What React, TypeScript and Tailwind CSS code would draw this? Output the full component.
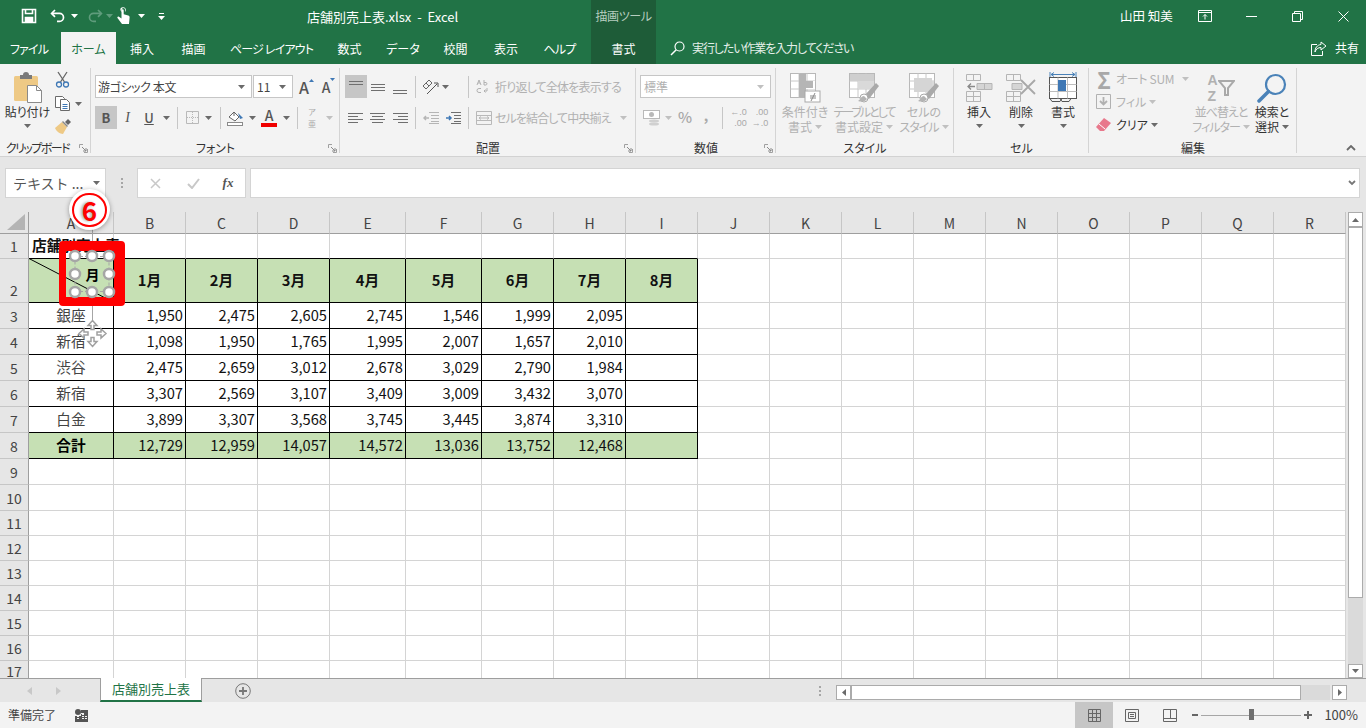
import type { ReactNode } from 'react';

function Caret({ dim = false, white = false }: { dim?: boolean; white?: boolean }) {
  return (
    <svg width="7" height="4" viewBox="0 0 7 4" className="shrink-0">
      <path d="M0 0h7L3.500 4z" fill={white ? '#fff' : dim ? '#c0c0c0' : '#6a6a6a'} />
    </svg>
  );
}

function Slot({ className, children }: { className: string; children?: ReactNode }) {
  return <div className={`flex h-full shrink-0 items-center justify-center ${className}`}>{children}</div>;
}

function Sep({ className }: { className: string }) {
  return (
    <div className={`flex h-full shrink-0 items-center justify-center ${className}`}>
      <div className="h-[22px] w-px bg-[#c6c6c6]" />
    </div>
  );
}

function Launcher() {
  return (
    <svg width="9" height="9" viewBox="0 0 9 9">
      <path d="M.5 4V.5H4M8.500 5v3.500H5" fill="none" stroke="#a0a0a0" />
      <path d="M3 3l4 4M4 7h3V4" fill="none" stroke="#8a8a8a" />
    </svg>
  );
}

function Group({ className, label, launcher, children }: { className: string; label: ReactNode; launcher?: boolean; children: ReactNode }) {
  return (
    <div className={`relative flex h-full shrink-0 flex-col ${className}`}>
      <div className="absolute right-0 top-[4px] h-[85px] w-px bg-[#d4d4d4]" />
      <div className="h-[76px]">{children}</div>
      <div className="whitespace-nowrap text-center text-[12px] leading-[16px] text-[#333]">{label}</div>
      {launcher && <div className="absolute bottom-[3px] right-[3px] flex"><Launcher /></div>}
    </div>
  );
}

function BigBtn({ className, icon, lines, dim }: { className: string; icon: ReactNode; lines: ReactNode[]; dim?: boolean }) {
  return (
    <div className={`flex shrink-0 flex-col items-center pt-[7px] text-[12px] leading-[15px] ${dim ? 'text-[#b1b1b1]' : 'text-[#333]'} ${className}`}>
      <div className="flex h-[33px] items-center justify-center">{icon}</div>
      {lines.map((l, i) => (
        <div key={i} className="flex items-center gap-[3px] whitespace-nowrap">
          {l}
          {i === lines.length - 1 && lines.length > 1 && <Caret dim={dim} />}
        </div>
      ))}
      {lines.length === 1 && <div className="mt-[5px] flex"><Caret dim={dim} /></div>}
    </div>
  );
}

function Lines({ rows, w = 20 }: { rows: [number, number, number][]; w?: number }) {
  return (
    <svg width={w} height="16" viewBox={`0 0 ${w} 16`}>
      {rows.map(([x, y, l], i) => (
        <rect key={i} x={x} y={y} width={l} height="1" fill="#6f6f6f" />
      ))}
    </svg>
  );
}

function Sheetlet({ fill = '#d9d9d9' }: { fill?: string }) {
  return (
    <>
      <rect x=".5" y=".5" width="25" height="24" fill="#fff" stroke="#b8b8b8" />
      <path d="M9 .5v24M17 .5v24M.5 8h25M.5 16h25" stroke="#c8c8c8" />
      <rect x="9" y="8" width="16" height="8" fill={fill} />
    </>
  );
}

function StyleBrush() {
  return (
    <g>
      <path d="M15 23l12-13 3 3-10 13z" fill="#a9a9a9" />
      <circle cx="15" cy="25" r="4" fill="#fff" stroke="#a9a9a9" />
      <path d="M9 28c3 1 7 1 9-2l-3-3c-3 0-3 3-6 5z" fill="#b4b4b4" />
    </g>
  );
}

const cols = ['A', 'B', 'C', 'D', 'E', 'F', 'G', 'H', 'I', 'J', 'K', 'L', 'M', 'N', 'O', 'P', 'Q', 'R'];

const shops: [string, string[]][] = [
  ['銀座', ['1,950', '2,475', '2,605', '2,745', '1,546', '1,999', '2,095']],
  ['新宿', ['1,098', '1,950', '1,765', '1,995', '2,007', '1,657', '2,010']],
  ['渋谷', ['2,475', '2,659', '3,012', '2,678', '3,029', '2,790', '1,984']],
  ['新宿', ['3,307', '2,569', '3,107', '3,409', '3,009', '3,432', '3,070']],
  ['白金', ['3,899', '3,307', '3,568', '3,745', '3,445', '3,874', '3,310']],
  ['合計', ['12,729', '12,959', '14,057', '14,572', '13,036', '13,752', '12,468']],
];

function Cell({ row, col }: { row: number; col: number }) {
  const inTable = col < 9 && row >= 2 && row <= 8;
  const aboveTable = col < 9 && row === 1;
  const green = inTable && (row === 2 || row === 8);
  const last = col === 17;
  const cls = [
    'flex items-center border-b border-r pb-px text-[14.67px] leading-none text-[#111] min-w-0',
    inTable ? 'border-r-black border-b-black' : 'border-r-[#d4d4d4]',
    aboveTable ? 'border-b-black' : inTable ? '' : 'border-b-[#d4d4d4]',
    green ? 'bg-[#c6e0b4]' : '',
    last ? 'border-r-[#9e9e9e]' : '',
  ].join(' ');
  let body: ReactNode = null;
  if (row === 1 && col === 0) body = <span className="ml-[3px] whitespace-nowrap text-[14.67px] font-bold">店舗別売上表</span>;
  if (row === 2 && col > 0 && col < 9) body = <span className="w-full text-center font-bold">{col}月</span>;
  if (row >= 3 && row <= 8 && col === 0) body = <span className={`w-full text-center ${row === 8 ? 'font-bold text-black' : 'text-[#444]'}`}>{shops[row - 3][0]}</span>;
  if (row >= 3 && row <= 8 && col > 0 && col < 8) body = <span className="w-full pr-[2px] text-right">{shops[row - 3][1][col - 1]}</span>;
  return <div className={cls}>{body}</div>;
}

const tabs = [
  ['ファイル', 'w-[61px] pr-[3px] tracking-[-0.8px] text-white'],
  ['ホーム', 'w-[55px] bg-[#f3f3f3] text-[#217346]'],
  ['挿入', 'w-[52px] text-white'],
  ['描画', 'w-[51px] text-white'],
  ['ページ レイアウト', 'w-[105px] tracking-[-0.8px] text-white'],
  ['数式', 'w-[51px] text-white'],
  ['データ', 'w-[56px] text-white'],
  ['校閲', 'w-[49px] text-white'],
  ['表示', 'w-[52px] text-white'],
  ['ヘルプ', 'w-[59px] pr-1 tracking-[-0.8px] text-white'],
  ['書式', 'w-[65px] bg-[#1e5c38] text-white'],
];

const rows = Array.from({ length: 17 }, (_, i) => i + 1);

export default function App() {
  return (
    <div className="relative h-[728px] w-[1366px] overflow-hidden bg-[#e6e6e6] font-['Noto_Sans_CJK_JP','Liberation_Sans',sans-serif] [font-feature-settings:'palt']">
      {/* title bar */}
      <div className="flex h-[32px] items-center bg-[#217346] text-[12px] text-white">
        <div className="flex h-full w-[307px] shrink-0 items-center">
          <Slot className="ml-[20px] w-[18px]">
            <svg width="16" height="16" viewBox="0 0 16 16" fill="none" stroke="#fff" strokeWidth="1.600">
              <path d="M1.500 1.500h13v13h-13z" />
              <path d="M4.500 1.500v4h7v-4" />
              <path d="M4.500 14.500v-5h7v5" fill="#fff" />
            </svg>
          </Slot>
          <Slot className="ml-[11px] w-[18px]">
            <svg width="16" height="14" viewBox="0 0 16 14" fill="none" stroke="#fff" strokeWidth="1.700">
              <path d="M5 1L1.600 4.400 5 7.800" />
              <path d="M2 4.400h7.500a4 4 0 0 1 0 8H7" />
            </svg>
          </Slot>
          <Slot className="w-[14px]"><Caret white /></Slot>
          <Slot className="ml-[5px] w-[18px]">
            <svg width="16" height="14" viewBox="0 0 16 14" fill="none" stroke="#5f9c7c" strokeWidth="1.700">
              <path d="M11 1l3.400 3.400L11 7.800" />
              <path d="M14 4.400H6.500a4 4 0 0 0 0 8H9" />
            </svg>
          </Slot>
          <Slot className="w-[10px]">
            <svg width="7" height="4" viewBox="0 0 7 4"><path d="M0 0h7L3.500 4z" fill="#5f9c7c" /></svg>
          </Slot>
          <Slot className="w-[18px]">
            <svg width="14" height="18" viewBox="0 0 14 18" fill="#fff">
              <path d="M4.500 1.500a3 3 0 0 1 5 0c.6 1.200.4 2.600-.4 3.500V2.800a1.700 1.700 0 0 0-3.400 0V5c-.9-.8-1.600-2.200-1.200-3.500z" />
              <path d="M5.500 3.300a1 1 0 0 1 2.200 0v4l4.500 1.200c1 .3 1.500 1 1.400 2l-.6 6.500H6L1.500 11c-.6-.8.500-1.900 1.400-1.300l2.600 1.800z" />
            </svg>
          </Slot>
          <Slot className="ml-[1px] w-[16px]"><Caret white /></Slot>
          <Slot className="ml-[3px] w-[18px]">
            <svg width="7" height="7" viewBox="0 0 7 7" fill="#fff"><rect x="1" width="5" height="1" /><path d="M0 3h7L3.500 7z" /></svg>
          </Slot>
        </div>
        <div className="w-[284px] shrink-0 whitespace-nowrap text-[13px] leading-none [font-feature-settings:normal]">店舗別売上表.xlsx &nbsp;-&nbsp; Excel</div>
        <div className="flex h-full w-[65px] shrink-0 items-center justify-center bg-[#1e5c38] text-[12px] tracking-[-0.4px] text-[#b5cdbf]">描画ツール</div>
        <div className="flex-1" />
        <div className="w-[77px] shrink-0 whitespace-nowrap text-[12.500px]">山田 知美</div>
        <Slot className="w-[15px]">
          <svg width="14" height="12" viewBox="0 0 14 12" fill="none" stroke="#fff">
            <path d="M.5 .5h13v11H.5zM.5 2.500h13" />
            <path d="M7 9.500V4.500M5 6.500l2-2 2 2" />
          </svg>
        </Slot>
        <Slot className="ml-[32px] w-[15px]"><div className="h-px w-[11px] bg-white" /></Slot>
        <Slot className="ml-[31px] w-[15px]">
          <svg width="11" height="11" viewBox="0 0 11 11" fill="none" stroke="#fff">
            <path d="M.5 2.500h8v8h-8z" />
            <path d="M2.500 2.500v-2h8v8h-2" />
          </svg>
        </Slot>
        <Slot className="ml-[31px] mr-[15px] w-[15px]">
          <svg width="11" height="11" viewBox="0 0 11 11" stroke="#fff"><path d="M.5 .5l10 10M10.500 .5l-10 10" /></svg>
        </Slot>
      </div>

      {/* tabs */}
      <div className="flex h-[32px] items-stretch bg-[#217346] text-[12px]">
        {tabs.map(([t, c]) => (
          <div key={t} className={`flex shrink-0 items-center justify-center whitespace-nowrap pt-[2px] ${c}`}>{t}</div>
        ))}
        <div className="ml-[14px] flex items-center gap-[7px] text-[#e4efe9]">
          <svg width="15" height="15" viewBox="0 0 15 15" fill="none" stroke="#fff" strokeWidth="1.200">
            <circle cx="9.500" cy="5.500" r="4.500" />
            <path d="M6.200 8.800L1 14" strokeWidth="1.500" />
          </svg>
          <span className="whitespace-nowrap tracking-[-1.1px]">実行したい作業を入力してください</span>
        </div>
        <div className="flex-1" />
        <div className="mr-[7px] flex items-center gap-[8px] text-white">
          <svg width="16" height="15" viewBox="0 0 16 15" fill="none" stroke="#fff">
            <path d="M6 3.500H.5v11h11V10" />
            <path d="M10 1l5 4-5 4V6.500C7 6.500 5 8 4 11c0-4 2-7 6-7.500z" />
          </svg>
          <span>共有</span>
        </div>
      </div>

      {/* ribbon */}
      <div className="flex h-[93px] border-b border-[#d2d2d2] bg-[#f3f3f3]">
        <Group className="w-[91px]" label={<span className="-ml-[16px] inline-block tracking-[-1.500px]">クリップボード</span>} launcher>
          <div className="flex">
            <BigBtn
              className="w-[55px]"
              lines={['貼り付け']}
              icon={
                <svg width="30" height="31" viewBox="0 0 30 31">
                  <rect x="1" y="4" width="24" height="25" rx="1.500" fill="#eec985" />
                  <path d="M7 3h3a3 3 0 0 1 6 0h3v4H7z" fill="#7a7a7a" />
                  <path d="M14.500 13.500h9l5 5v12h-14z" fill="#fff" stroke="#8a8a8a" />
                  <path d="M23.500 13.500v5h5" fill="none" stroke="#8a8a8a" />
                </svg>
              }
            />
            <div className="flex flex-col">
              <div className="flex h-[23px] items-center pt-[7px]">
                <svg width="15" height="17" viewBox="0 0 15 17" fill="none">
                  <path d="M3 1l6.500 10M12 1L5.500 11" stroke="#666" strokeWidth="1.300" />
                  <circle cx="4" cy="13.500" r="2.500" stroke="#3f78b5" strokeWidth="1.300" />
                  <circle cx="11" cy="13.500" r="2.500" stroke="#3f78b5" strokeWidth="1.300" />
                </svg>
              </div>
              <div className="mt-[5px] flex h-[23px] items-center gap-[5px]">
                <svg width="15" height="15" viewBox="0 0 15 15" fill="#fff" stroke="#6a6a6a">
                  <path d="M.5 .5h7l2 2v9h-9z" />
                  <path d="M5.500 3.500h6l3 3v8h-9z" />
                  <path d="M7.500 8.500h5M7.500 10.500h5M7.500 12.500h5" stroke="#3f78b5" />
                </svg>
                <Caret />
              </div>
              <div className="flex h-[23px] items-center">
                <svg width="16" height="15" viewBox="0 0 16 15">
                  <path d="M0 9l7-6 5 5-4 7c-3 0-7-3-8-6z" fill="#eec985" />
                  <path d="M7 3l5 5 1-1-5-5z" fill="#888" />
                  <path d="M10 3l3-3 3 3-3 3z" fill="#666" />
                </svg>
              </div>
            </div>
          </div>
        </Group>

        <Group className="w-[249px]" label="フォント" launcher>
          <div className="mt-[11px] flex h-[23px] pl-[4px]">
            <div className="flex h-full w-[157px] shrink-0 items-center justify-between border border-[#c6c6c6] bg-white pl-[2px] pr-[6px] text-[12px] tracking-[-0.4px] text-[#444]">
              <span>游ゴシック 本文</span>
              <Caret />
            </div>
            <div className="ml-px flex h-full w-[40px] shrink-0 items-center justify-between border border-[#c6c6c6] bg-white pl-[3px] pr-[6px] text-[12px] text-[#444]">
              <span>11</span>
              <Caret />
            </div>
            <Slot className="w-[22px]">
              <span className="relative text-[16px] font-medium leading-none text-[#555]">A<svg width="5" height="3" viewBox="0 0 5 3" className="absolute -right-[5px] top-0"><path d="M0 3h5L2.500 0z" fill="#3f78b5" /></svg></span>
            </Slot>
            <Slot className="w-[22px]">
              <span className="relative text-[14px] font-medium leading-none text-[#555]">A<svg width="5" height="3" viewBox="0 0 5 3" className="absolute -right-[5px] -top-[2px]"><path d="M0 0h5L2.500 3z" fill="#3f78b5" /></svg></span>
            </Slot>
          </div>
          <div className="mt-[8px] flex h-[23px] pl-[4px] text-[#555]">
            <Slot className="w-[22px] bg-[#c6c6c6] text-[13px] font-bold">B</Slot>
            <Slot className="w-[21px] font-['Liberation_Serif',serif] text-[14px] italic">I</Slot>
            <Slot className="w-[22px] text-[13px] font-medium underline">U</Slot>
            <Slot className="w-[12px]"><Caret /></Slot>
            <Sep className="w-[10px]" />
            <Slot className="w-[20px]">
              <svg width="13" height="13" viewBox="0 0 13 13" fill="none" stroke="#b9b9b9">
                <path d="M.5 .5h12v12H.5z" />
                <path d="M6.500 1v11M1 6.500h11" strokeDasharray="1 1" />
              </svg>
            </Slot>
            <Slot className="w-[13px]"><Caret /></Slot>
            <Sep className="w-[10px]" />
            <Slot className="w-[21px]">
              <svg width="17" height="16" viewBox="0 0 17 16">
                <path d="M2 7l5-5 5 5-4 4z" fill="#fff" stroke="#666" />
                <path d="M7 2v4" stroke="#666" />
                <path d="M11 3l3 3 2 2-3 1z" fill="#3f78b5" />
                <rect x=".5" y="12.500" width="15" height="3" fill="#fff" stroke="#8a8a8a" />
              </svg>
            </Slot>
            <Slot className="w-[12px]"><Caret /></Slot>
            <Slot className="w-[22px]">
              <div className="flex flex-col items-center">
                <span className="text-[14px] font-medium leading-[13px]">A</span>
                <div className="mt-[1px] h-[4px] w-[16px] bg-[#f00000]" />
              </div>
            </Slot>
            <Slot className="w-[12px]"><Caret /></Slot>
            <Sep className="w-[10px]" />
            <Slot className="w-[20px] text-[8px] leading-[12px] text-[#aaa]">
              <div className="text-center">ア<br />亜</div>
            </Slot>
            <Slot className="w-[14px]"><Caret dim /></Slot>
          </div>
        </Group>

        <Group className="w-[296px]" label="配置" launcher>
          <div className="mt-[11px] flex h-[23px] pl-[5px] text-[12px] text-[#b1b1b1]">
            <Slot className="w-[22px] bg-[#c6c6c6]"><Lines w={14} rows={[[0, 2, 14], [0, 5, 14]]} /></Slot>
            <Slot className="w-[22px]"><Lines w={14} rows={[[0, 5, 14], [0, 8, 14], [0, 11, 14]]} /></Slot>
            <Slot className="w-[22px]"><Lines w={14} rows={[[0, 11, 14], [0, 14, 14]]} /></Slot>
            <Sep className="w-[8px]" />
            <Slot className="w-[22px]">
              <svg width="17" height="16" viewBox="0 0 17 16" fill="none" stroke="#666">
                <path d="M1 7l6-6 3 3-6 6zM4 4l3 3" />
                <path d="M5 15l10-10M12 4h4v4" stroke="#555" />
              </svg>
            </Slot>
            <Slot className="w-[8px]"><Caret /></Slot>
            <Slot className="w-[14px]" />
            <Sep className="w-[10px]" />
            <Slot className="w-[19px] pl-[1px]">
              <svg width="14" height="16" viewBox="0 0 14 16" fill="none" stroke="#b1b1b1">
                <path d="M1 6l2-5 2 5M2 4h2M8 1v5M8 3.500h2a1.300 1.300 0 0 1 0 2.500H8M5 9.500H3a2 2 0 0 0 0 4h2M11 9v3H8M9.500 10.500L8 12l1.500 1.500" />
              </svg>
            </Slot>
            <Slot className="ml-[3px] w-auto whitespace-nowrap tracking-[-0.8px]">折り返して全体を表示する</Slot>
          </div>
          <div className="mt-[8px] flex h-[23px] pl-[4px] text-[12px] text-[#b1b1b1]">
            <Slot className="w-[22px]"><Lines w={15} rows={[[0, 3, 15], [0, 6, 10], [0, 9, 15], [0, 12, 10]]} /></Slot>
            <Slot className="w-[23px]"><Lines w={15} rows={[[0, 3, 15], [2, 6, 11], [0, 9, 15], [2, 12, 11]]} /></Slot>
            <Slot className="w-[22px]"><Lines w={15} rows={[[0, 3, 15], [5, 6, 10], [0, 9, 15], [5, 12, 10]]} /></Slot>
            <Sep className="w-[8px]" />
            <Slot className="w-[23px]">
              <svg width="16" height="12" viewBox="0 0 16 12" fill="none" stroke="#b5b5b5">
                <path d="M6 .5h10M8 3.500h8M8 6.500h8M8 9.500h8M6 11.500h10" />
                <path d="M6 6H1M3 4L1 6l2 2" strokeWidth="1.500" />
              </svg>
            </Slot>
            <Slot className="w-[21px]">
              <svg width="16" height="12" viewBox="0 0 16 12" fill="none" stroke="#6f6f6f">
                <path d="M6 .5h10M9 3.500h7M9 6.500h7M9 9.500h7M6 11.500h10" />
                <path d="M1 6h5M4 4l2 2-2 2" stroke="#3f78b5" strokeWidth="1.500" />
              </svg>
            </Slot>
            <Sep className="w-[10px]" />
            <Slot className="ml-[3px] w-[16px]">
              <svg width="16" height="14" viewBox="0 0 16 14" fill="none" stroke="#b9b9b9">
                <path d="M.5 .5h15v13H.5zM.5 4.500h15M.5 9.500h15M3 7h10M3 7l2-1.500M3 7l2 1.500M13 7l-2-1.500M13 7l-2 1.500" />
              </svg>
            </Slot>
            <Slot className="ml-[3px] w-[116px] justify-start whitespace-nowrap tracking-[-0.9px]">セルを結合して中央揃え</Slot>
            <Slot className="ml-[8px] w-[8px]"><Caret dim /></Slot>
          </div>
        </Group>

        <Group className="w-[140px]" label="数値" launcher>
          <div className="ml-[4px] mt-[11px] flex h-[23px] w-[131px] items-center justify-between border border-[#c6c6c6] bg-white pl-[3px] pr-[6px] text-[12px] text-[#b1b1b1]">
            <span>標準</span>
            <Caret dim />
          </div>
          <div className="mt-[8px] flex h-[23px] pl-[4px] text-[#a8a8a8]">
            <Slot className="w-[22px]">
              <svg width="17" height="16" viewBox="0 0 17 16">
                <rect x=".5" y=".5" width="16" height="8" fill="#fff" stroke="#b9b9b9" />
                <circle cx="8.500" cy="4.500" r="2.500" fill="#b9b9b9" />
                <ellipse cx="11" cy="11" rx="5" ry="1.500" fill="#d0d0d0" />
                <ellipse cx="11" cy="14" rx="5" ry="1.500" fill="#d0d0d0" />
              </svg>
            </Slot>
            <Slot className="w-[12px]"><Caret dim /></Slot>
            <Slot className="w-[22px] text-[15px] font-medium">%</Slot>
            <Slot className="w-[20px] pb-[5px] text-[14px] font-bold">,</Slot>
            <Sep className="w-[12px]" />
            <Slot className="w-[21px] font-['Liberation_Sans',sans-serif] text-[9px] leading-[11px]"><div className="whitespace-nowrap text-right">←.0<br />.00</div></Slot>
            <Slot className="w-[22px] font-['Liberation_Sans',sans-serif] text-[9px] leading-[11px]"><div className="whitespace-nowrap text-right">.00<br />→.0</div></Slot>
          </div>
        </Group>

        <Group className="w-[178px]" label="スタイル">
          <div className="flex">
            <BigBtn
              className="w-[58px]"
              dim
              lines={['条件付き', '書式']}
              icon={
                <svg width="31" height="30" viewBox="0 0 31 30">
                  <Sheetlet fill="#fff" />
                  <rect x="9" y="1" width="7" height="23" fill="#b5b5b5" />
                  <rect x="9" y="8" width="14" height="7" fill="#b5b5b5" />
                  <rect x="15" y="18" width="15" height="11" fill="#fff" stroke="#a9a9a9" />
                  <path d="M20 23h6M20 25h6M25 20l-4 8" stroke="#8a8a8a" fill="none" />
                </svg>
              }
            />
            <BigBtn
              className="w-[60px]"
              dim
              lines={[<span className="tracking-[-2px]">テーブルとして</span>, '書式設定']}
              icon={
                <svg width="31" height="30" viewBox="0 0 31 30">
                  <Sheetlet />
                  <rect x="1" y="1" width="24" height="7" fill="#cfcfcf" />
                  <StyleBrush />
                </svg>
              }
            />
            <BigBtn
              className="w-[60px]"
              dim
              lines={['セルの', <span className="tracking-[-1px]">スタイル</span>]}
              icon={
                <svg width="31" height="30" viewBox="0 0 31 30">
                  <Sheetlet />
                  <rect x="5" y="5" width="18" height="14" fill="#d5d5d5" />
                  <StyleBrush />
                </svg>
              }
            />
          </div>
        </Group>

        <Group className="w-[135px]" label="セル">
          <div className="flex pl-[4px]">
            <BigBtn
              className="w-[42px]"
              lines={['挿入']}
              icon={
                <svg width="27" height="30" viewBox="0 0 27 30" fill="none" stroke="#b5b5b5">
                  <path d="M.5 1.500h14v6H.5zM7.500 1.500v6M.5 18.500h14v10H.5zM.5 23.500h14M7.500 18.500v10" />
                  <path d="M11 10.500h15v6H11zM18.500 10.500v6" fill="#d5d5d5" />
                  <path d="M9 13.500H2M5 10.500l-3 3 3 3" stroke="#8a8a8a" strokeWidth="1.300" />
                </svg>
              }
            />
            <BigBtn
              className="w-[42px]"
              lines={['削除']}
              icon={
                <svg width="30" height="30" viewBox="0 0 30 30" fill="none" stroke="#b5b5b5">
                  <path d="M.5 1.500h14v6H.5zM7.500 1.500v6M.5 18.500h14v10H.5zM.5 23.500h14M7.500 18.500v10" />
                  <path d="M6 10.500h10v6H6z" fill="#d5d5d5" />
                  <path d="M15 7l14 14M29 7L15 21" stroke="#a8a8a8" strokeWidth="1.800" />
                </svg>
              }
            />
            <BigBtn
              className="w-[42px]"
              lines={['書式']}
              icon={
                <svg width="28" height="31" viewBox="0 0 28 31" fill="none">
                  <path d="M1 0v5M27 0v5M2 2.500h24M5 .5l-3 2 3 2M23 .5l3 2-3 2" stroke="#4a82b8" />
                  <rect x=".5" y="5.500" width="27" height="21" fill="#fff" stroke="#555" />
                  <path d="M9 5.500v21M18.500 5.500v21M.5 12.500h27M.5 19.500h27" stroke="#bdbdbd" />
                  <rect x="9" y="8" width="8" height="11" fill="#3f78b5" />
                  <path d="M1 26.500l2 3h8l2-3M11 26.500l2 3h7l2-3" stroke="#555" />
                </svg>
              }
            />
          </div>
        </Group>

        <Group className="w-[208px]" label="編集">
          <div className="flex">
            <div className="w-[105px] shrink-0 pl-[7px] pt-[3px] text-[12px] text-[#b1b1b1]">
              <div className="flex h-[23px] items-center">
                <Slot className="w-[16px] text-[22px] font-bold leading-none text-[#a8a8a8]">Σ</Slot>
                <span className="ml-[4px] w-[66px] whitespace-nowrap tracking-[-0.3px]">オート SUM</span>
                <Caret dim />
              </div>
              <div className="flex h-[23px] items-center">
                <svg width="15" height="15" viewBox="0 0 15 15" fill="none" stroke="#b1b1b1" className="shrink-0">
                  <path d="M.5 .5h14v14H.5z" />
                  <path d="M7.500 3v7M4 7l3.500 3.500L11 7" strokeWidth="1.800" />
                </svg>
                <span className="ml-[5px] whitespace-nowrap">フィル</span>
                <span className="ml-[3px] flex"><Caret dim /></span>
              </div>
              <div className="flex h-[23px] items-center text-[#333]">
                <svg width="15" height="14" viewBox="0 0 15 14" className="shrink-0">
                  <path d="M0 9l8-9 7 5-7 8H4z" fill="#e8788c" />
                  <path d="M3 6l6 5" stroke="#fff" />
                </svg>
                <span className="ml-[5px] whitespace-nowrap">クリア</span>
                <span className="ml-[3px] flex"><Caret /></span>
              </div>
            </div>
            <BigBtn
              className="w-[54px]"
              dim
              lines={[<span className="tracking-[-1px]">並べ替えと</span>, <span className="tracking-[-1px]">フィルター</span>]}
              icon={
                <div className="flex items-center">
                  <div className="font-['Liberation_Sans',sans-serif] text-[14px] font-bold leading-[16px] text-[#b1b1b1]">A<br />Z</div>
                  <svg width="17" height="16" viewBox="0 0 17 16"><path d="M1 1h15l-6 7v7H7V8z" fill="none" stroke="#a9a9a9" strokeWidth="2" /></svg>
                </div>
              }
            />
            <BigBtn
              className="w-[48px]"
              lines={['検索と', '選択']}
              icon={
                <svg width="30" height="30" viewBox="0 0 30 30" fill="none">
                  <circle cx="18.500" cy="11.500" r="9.500" stroke="#4a82b8" strokeWidth="2.200" />
                  <path d="M11.500 18.500L2 28" stroke="#4a82b8" strokeWidth="3.500" strokeLinecap="round" />
                </svg>
              }
            />
          </div>
        </Group>

        <div className="flex flex-1 items-end justify-end pb-[5px] pr-[10px]">
          <svg width="10" height="6" viewBox="0 0 10 6" fill="none" stroke="#6a6a6a" strokeWidth="1.800"><path d="M1 5l4-4 4 4" /></svg>
        </div>
      </div>

      {/* formula bar */}
      <div className="flex h-[55px] items-start bg-[#e6e6e6] pt-[11px]">
        <div className="ml-[5px] flex h-[30px] w-[101px] items-center justify-between border border-[#d4d4d4] bg-white pl-[7px] pr-[5px] text-[14px] text-[#555] [font-feature-settings:normal]">
          <span className="whitespace-nowrap">テキスト ...</span>
          <Caret />
        </div>
        <div className="flex h-[30px] w-[31px] flex-col items-center justify-center gap-[2px]">
          <div className="h-[2px] w-[2px] bg-[#a6a6a6]" />
          <div className="h-[2px] w-[2px] bg-[#a6a6a6]" />
          <div className="h-[2px] w-[2px] bg-[#a6a6a6]" />
        </div>
        <div className="flex h-[30px] w-[109px] items-center border border-[#d4d4d4] bg-white">
          <Slot className="ml-[6px] w-[22px]">
            <svg width="11" height="11" viewBox="0 0 11 11" stroke="#c8c8c8" strokeWidth="1.500"><path d="M1 1l9 9M10 1l-9 9" /></svg>
          </Slot>
          <Slot className="ml-[16px] w-[22px]">
            <svg width="13" height="11" viewBox="0 0 13 11" fill="none" stroke="#c8c8c8" strokeWidth="2"><path d="M1 6l4 4 7-9" /></svg>
          </Slot>
          <Slot className="ml-[13px] w-[22px] font-['Liberation_Serif',serif] text-[13px] font-bold italic text-[#555]">fx</Slot>
        </div>
        <div className="ml-[4px] flex h-[30px] w-[1110px] items-center justify-end border border-[#d4d4d4] bg-white pr-[3px]">
          <svg width="8" height="6" viewBox="0 0 8 6" fill="none" stroke="#777" strokeWidth="1.800"><path d="M1 1l3 3 3-3" /></svg>
        </div>
      </div>

      {/* sheet */}
      <div className="flex h-[466px]">
        <div className="grid h-[466px] w-[1346px] shrink-0 grid-cols-[29px_85px_72px_72px_72px_76px_76px_72px_72px_72px_72px_72px_72px_72px_72px_72px_72px_72px_72px] grid-rows-[22px_25px_44px_26px_26px_26px_26px_26px_26px_26px_26px_25px_25px_25px_25px_25px_25px_18px] overflow-hidden bg-white">
          <div className="flex items-end justify-end border-b border-r border-[#9e9e9e] bg-[#e6e6e6] pb-[3px] pr-[3px]">
            <svg width="18" height="16" viewBox="0 0 18 16"><path d="M18 0v16H0z" fill="#b4b4b4" /></svg>
          </div>
          {cols.map((c) => (
            <div key={c} className="flex items-center justify-center border-b border-r border-b-[#9e9e9e] border-r-[#c6c6c6] bg-[#e6e6e6] text-[14px] leading-none text-[#444]">
              {c}
            </div>
          ))}
          {rows.flatMap((r) => [
            <div key={`h${r}`} className={`flex justify-center border-b border-r border-b-[#c6c6c6] border-r-[#9e9e9e] bg-[#e6e6e6] text-[14px] leading-none text-[#444] ${r === 2 ? 'items-end pb-[5px]' : r === 17 ? 'items-start pt-[3px]' : 'items-center'}`}>
              {r}
            </div>,
            ...cols.map((_, i) => <Cell key={`${r}-${i}`} row={r} col={i} />),
          ])}
        </div>
        <div className="flex w-[20px] flex-col pl-[2px]">
          <div className="flex h-[15px] w-[15px] items-center justify-center border border-[#ababab] bg-white">
            <svg width="7" height="4" viewBox="0 0 7 4"><path d="M0 4h7L3.500 0z" fill="#6a6a6a" /></svg>
          </div>
          <div className="h-[371px] w-[15px] border border-[#ababab] bg-white" />
          <div className="w-[15px] flex-1 bg-[#dadada]" />
          <div className="flex h-[14px] w-[15px] items-center justify-center border border-[#ababab] bg-white">
            <svg width="7" height="4" viewBox="0 0 7 4"><path d="M0 0h7L3.500 4z" fill="#6a6a6a" /></svg>
          </div>
        </div>
      </div>

      {/* sheet tabs */}
      <div className="flex h-[24px] border-t border-[#9e9e9e] bg-[#e6e6e6]">
        <Slot className="ml-[26px] w-[6px]">
          <svg width="5" height="8" viewBox="0 0 5 8"><path d="M5 0v8L0 4z" fill="#c8c8c8" /></svg>
        </Slot>
        <Slot className="ml-[23px] w-[6px]">
          <svg width="5" height="8" viewBox="0 0 5 8"><path d="M0 0v8l5-4z" fill="#c8c8c8" /></svg>
        </Slot>
        <div className="-mt-px ml-[39px] flex h-[24px] w-[102px] shrink-0 items-center justify-center border-x border-b-2 border-x-[#9e9e9e] border-b-[#217346] bg-white text-[13px] text-[#217346]">
          店舗別売上表
        </div>
        <Slot className="ml-[33px] w-[16px]">
          <svg width="16" height="16" viewBox="0 0 16 16" fill="none" stroke="#777">
            <circle cx="8" cy="8" r="7.300" />
            <path d="M8 4v8M4 8h8" strokeWidth="1.800" />
          </svg>
        </Slot>
        <div className="flex h-full w-[571px] shrink-0 flex-col items-end justify-center gap-[2px] pr-[1px]">
          <div className="h-[2px] w-[2px] bg-[#a6a6a6]" />
          <div className="h-[2px] w-[2px] bg-[#a6a6a6]" />
          <div className="h-[2px] w-[2px] bg-[#a6a6a6]" />
        </div>
        <div className="ml-[14px] mt-[6px] flex h-[15px] w-[512px] shrink-0">
          <div className="flex w-[15px] items-center justify-center border border-[#ababab] bg-white">
            <svg width="4" height="7" viewBox="0 0 4 7"><path d="M4 0v7L0 3.500z" fill="#6a6a6a" /></svg>
          </div>
          <div className="w-[450px] border border-[#ababab] bg-white" />
          <div className="w-[29px] bg-[#dadada]" />
          <div className="ml-[2px] flex w-[15px] items-center justify-center border border-[#ababab] bg-white">
            <svg width="4" height="7" viewBox="0 0 4 7"><path d="M0 0v7l4-3.500z" fill="#6a6a6a" /></svg>
          </div>
        </div>
      </div>

      {/* status bar */}
      <div className="flex h-[26px] items-center bg-[#f3f3f3] text-[12px] text-[#444]">
        <span className="ml-[8px] w-[67px] shrink-0 whitespace-nowrap [font-feature-settings:normal]">準備完了</span>
        <svg width="13" height="13" viewBox="0 0 13 13" fill="#555" className="shrink-0">
          <circle cx="3" cy="3" r="3" />
          <path d="M6 1h7v12H0V7h2v1h2V7h2V5h1v1h2V4H6zM7 7v1h2V7zM10 7v1h2V7zM2 9v1h2V9zM7 9v1h2V9zM10 9v1h2V9z" fillRule="evenodd" />
        </svg>
        <div className="flex-1" />
        <Slot className="w-[38px] bg-[#c6c6c6]">
          <svg width="13" height="13" viewBox="0 0 13 13" fill="none" stroke="#666">
            <path d="M.5 .5h12v12H.5zM4.500 .5v12M8.500 .5v12M.5 4.500h12M.5 8.500h12" />
          </svg>
        </Slot>
        <Slot className="w-[38px]">
          <svg width="14" height="13" viewBox="0 0 14 13" fill="none" stroke="#666">
            <path d="M.5 .5h13v12H.5zM3.500 3.500h7v6h-7zM5 5.500h4M5 7.500h4" />
          </svg>
        </Slot>
        <Slot className="w-[38px]">
          <svg width="14" height="13" viewBox="0 0 14 13" fill="none" stroke="#666">
            <path d="M.5 .5h13v12H.5zM.5 9.500h13M7.500 .5v9" />
          </svg>
        </Slot>
        <Slot className="w-[12px]"><div className="h-[2px] w-[6px] bg-[#666]" /></Slot>
        <div className="relative flex h-full w-[100px] shrink-0 items-center">
          <div className="h-px w-full bg-[#a6a6a6]" />
          <div className="absolute left-[48px] top-[7px] h-[11px] w-[5px] bg-[#6f6f6f]" />
        </div>
        <Slot className="w-[14px]">
          <svg width="8" height="8" viewBox="0 0 8 8" fill="#666"><path d="M3 0h2v3h3v2H5v3H3V5H0V3h3z" /></svg>
        </Slot>
        <span className="ml-[9px] mr-[8px] text-[13px] [font-feature-settings:normal]">100%</span>
      </div>

      {/* selected text box and callout over the sheet */}
      <svg width="1366" height="728" className="pointer-events-none absolute left-0 top-0">
        <path d="M29 258.500L113 302" stroke="#000" />
        <path d="M92.500 224v20M92.500 296v24" stroke="#a6a6a6" />
        <path d="M75 256.500h34v35H75z" fill="none" stroke="#a6a6a6" strokeDasharray="3 2" />
      </svg>
      <div className="absolute left-[59px] top-[241px] h-[65px] w-[66px] rounded-[4px] border-b-[9px] border-l-[7px] border-r-[11px] border-t-[10px] border-[#ff0000]" />
      <div className="absolute left-[76px] top-[264px] flex h-[20px] w-[33px] items-center justify-center text-[14px] font-bold leading-none text-black">月</div>
      <svg width="1366" height="728" className="pointer-events-none absolute left-0 top-0">
        {[75, 92, 109].map((x) =>
          [256, 274, 292].map((y) =>
            x === 92 && y === 274 ? null : <circle key={`${x}-${y}`} cx={x} cy={y} r="5" fill="#fff" stroke="#a6a6a6" strokeWidth="2.500" />,
          ),
        )}
        <g fill="#fff" stroke="#a0a0a0" strokeWidth="1.500">
          <path d="M92.500 320.500l4.500 5h-3v4h-3v-4h-3z" />
          <path d="M92.500 346.500l4.500-5h-3v-4h-3v4h-3z" />
          <path d="M79 333.500l5-4.500v3h4v3h-4v3z" />
          <path d="M106 333.500l-5-4.500v3h-4v3h4v3z" />
        </g>
      </svg>
      <div className="absolute left-[69px] top-[189px] flex h-[41px] w-[41px] items-center justify-center rounded-full bg-white shadow-[0_1px_5px_rgba(0,0,0,0.35)]">
        <div className="flex h-[34px] w-[35px] items-center justify-center rounded-full border-2 border-[#ff0000] text-[26px] font-bold leading-none text-[#ff0000] [text-shadow:-2px_0_3px_#aaa]">6</div>
      </div>
    </div>
  );
}
